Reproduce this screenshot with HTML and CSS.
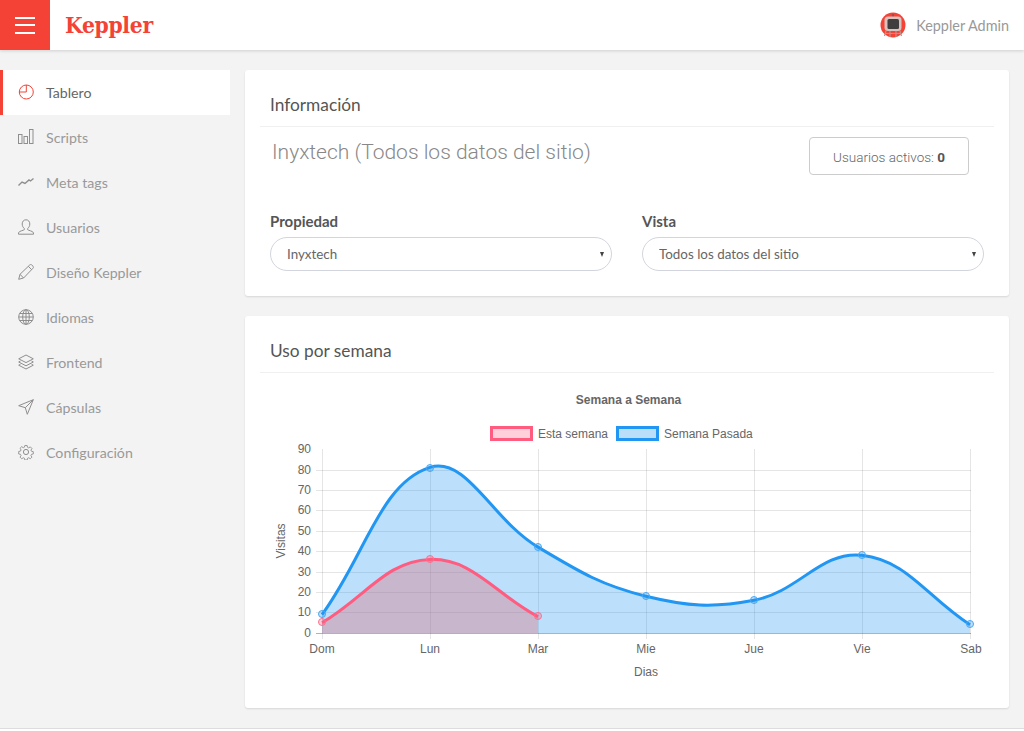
FILE: index.html
```html
<!DOCTYPE html>
<html lang="es">
<head>
  <meta charset="UTF-8" />
  <meta name="viewport" content="width=device-width, initial-scale=1.0" />
  <title>Keppler - Tablero</title>
  <link rel="stylesheet" href="styles.css">
</head>
<body>

  <header class="topbar">
    <button class="burger" type="button" aria-label="Menu"><span></span><span></span><span></span></button>
    <a class="logo" href="#">Keppler</a>
    <div class="user">
      <svg class="avatar" viewBox="0 0 26 26">
        <circle cx="13" cy="13" r="12.5" fill="#f44336"/>
        <path d="M13 2v3" stroke="#6a4a48" stroke-width="1"/>
        <rect x="4.500" y="4.500" width="17" height="14.500" rx="3.500" fill="#d8c2bd"/>
        <rect x="7.500" y="7" width="11.500" height="10" rx="1.500" fill="#3f3d3d"/>
        <path d="M6 19l-1.500 5M20 19l1.500 5M10 19v6M16 19v6M5 21.500h16" stroke="#b9928c" stroke-width="1.200" fill="none"/>
      </svg>
      <span>Keppler Admin</span>
    </div>
  </header>

  <div class="layout">
    <nav class="sidebar">
      <a class="nav-item active" href="#">
        <svg class="icon" viewBox="0 0 16 16"><circle cx="8.300" cy="8" r="7"/><path d="M8.300 1V8H1.300"/></svg>
        Tablero
      </a>
      <a class="nav-item" href="#">
        <svg class="icon" viewBox="0 0 16 16"><rect x=".5" y="5.500" width="3.500" height="9"/><rect x="6" y="7.500" width="3.500" height="7"/><rect x="11.500" y=".5" width="3.500" height="14"/></svg>
        Scripts
      </a>
      <a class="nav-item" href="#">
        <svg class="icon" viewBox="0 0 16 16"><path stroke-width="1.400" d="M.5 11.500L4 8l3 1.500L11 6l1.500 1L15.500 4.500"/></svg>
        Meta tags
      </a>
      <a class="nav-item" href="#">
        <svg class="icon" viewBox="0 0 16 16"><path d="M8 .8c2.300 0 3.800 1.700 3.800 4.200 0 2-1 3.700-2.100 4.400v1.300c0 .7 5.800 1.300 5.800 3.300v1.200H.5V13.900c0-1.900 5.800-2.600 5.800-3.200V9.400C5.200 8.700 4.200 7 4.200 5 4.200 2.500 5.700.8 8 .8Z"/></svg>
        Usuarios
      </a>
      <a class="nav-item" href="#">
        <svg class="icon" viewBox="0 0 16 16"><path d="M.7 15.300l1.300-5L11.800.9c.6-.5 1.400-.5 2 .1l1.200 1.200c.6.6.6 1.400 0 2L5.600 14Z"/><path d="M2 10.300L5.600 14M10.300 2.300l3.400 3.400"/></svg>
        Diseño Keppler
      </a>
      <a class="nav-item" href="#">
        <svg class="icon" viewBox="0 0 16 16"><circle cx="8" cy="8" r="7.300"/><ellipse cx="8" cy="8" rx="3.300" ry="7.300"/><path d="M8 .7v14.600M.7 8h14.600M1.700 4.500h12.600M1.700 11.500h12.600"/></svg>
        Idiomas
      </a>
      <a class="nav-item" href="#">
        <svg class="icon" viewBox="0 0 16 16"><path d="M8 1l7.300 3.800L8 8.600.7 4.800Z"/><path d="M2.500 7L.7 8 8 11.800 15.300 8l-1.800-1"/><path d="M2.500 10.200L.7 11.200 8 15l7.300-3.800-1.800-1"/></svg>
        Frontend
      </a>
      <a class="nav-item" href="#">
        <svg class="icon" viewBox="0 0 16 16"><path d="M15.300 .7L.7 6.700l6.600 2 2 6.600Z"/><path d="M15.300 .7L7.300 8.700"/></svg>
        Cápsulas
      </a>
      <a class="nav-item" href="#">
        <svg class="icon" viewBox="0 0 16 16"><path d="M6.700.8h2.600l.4 2 1.300.6 1.800-1.100 1.800 1.800-1.100 1.800.6 1.300 2 .4v2.600l-2 .4-.6 1.300 1.100 1.800-1.800 1.800-1.800-1.100-1.300.6-.4 2H6.700l-.4-2-1.300-.6-1.800 1.100-1.800-1.800 1.100-1.800-.6-1.300-2-.4V7.400l2-.4.6-1.300-1.100-1.800 1.800-1.800 1.800 1.100 1.300-.6Z" transform="translate(.8 .8) scale(.9)"/><circle cx="8" cy="8" r="2.600"/></svg>
        Configuración
      </a>
    </nav>

    <main class="content">
      <section class="card">
        <h3 class="card-title">Información</h3>
        <div class="info-top">
          <h2 class="site-name">Inyxtech (Todos los datos del sitio)</h2>
          <div class="active-users">Usuarios activos: <b>0</b></div>
        </div>
        <div class="filters">
          <div class="field">
            <label for="propiedad">Propiedad</label>
            <div class="select-box"><select id="propiedad"><option>Inyxtech</option></select></div>
          </div>
          <div class="field">
            <label for="vista">Vista</label>
            <div class="select-box"><select id="vista"><option>Todos los datos del sitio</option></select></div>
          </div>
        </div>
      </section>

      <section class="card">
        <h3 class="card-title">Uso por semana</h3>
        <svg class="chart" viewBox="245 373 764 335">
          <text class="chart-title" x="628.500" y="403.500" text-anchor="middle">Semana a Semana</text>

          <rect x="491.500" y="427.500" width="40" height="12" fill="#ffd0d9" stroke="#ff5c7f" stroke-width="3"/>
          <text class="chart-label" x="538" y="437.500">Esta semana</text>
          <rect x="617.500" y="427.500" width="40" height="12" fill="#bbdffb" stroke="#2196f3" stroke-width="3"/>
          <text class="chart-label" x="664" y="437.500">Semana Pasada</text>

          <g class="grid">
            <path d="M322.500 449v190M430.500 449v190M538.500 449v190M646.500 449v190M754.500 449v190M862.500 449v190M970.500 449v190"/>
            <path d="M316 470.500h655M316 490.500h655M316 510.500h655M316 531.500h655M316 551.500h655M316 572.500h655M316 592.500h655M316 612.500h655"/>
          </g>
          <path class="axis" d="M316 633.500h655"/>

          <g class="chart-label">
            <text x="311" y="453" text-anchor="end">90</text>
            <text x="311" y="474" text-anchor="end">80</text>
            <text x="311" y="494" text-anchor="end">70</text>
            <text x="311" y="514" text-anchor="end">60</text>
            <text x="311" y="535" text-anchor="end">50</text>
            <text x="311" y="555" text-anchor="end">40</text>
            <text x="311" y="576" text-anchor="end">30</text>
            <text x="311" y="596" text-anchor="end">20</text>
            <text x="311" y="616" text-anchor="end">10</text>
            <text x="311" y="637" text-anchor="end">0</text>
            <text x="322" y="653" text-anchor="middle">Dom</text>
            <text x="430" y="653" text-anchor="middle">Lun</text>
            <text x="538" y="653" text-anchor="middle">Mar</text>
            <text x="646" y="653" text-anchor="middle">Mie</text>
            <text x="754" y="653" text-anchor="middle">Jue</text>
            <text x="862" y="653" text-anchor="middle">Vie</text>
            <text x="971" y="653" text-anchor="middle">Sab</text>
            <text x="646" y="676" text-anchor="middle">Dias</text>
            <text transform="translate(285 541) rotate(-90)" text-anchor="middle">Visitas</text>
          </g>

          <path class="area-blue" d="M322 614.600C365.200 555.700 380.200 483 430 467.400C466.600 456 492.100 519.800 538 547.100C578.500 571.300 600.800 585.100 646 596.200C687.200 606.300 712.500 608.200 754 600.300C798.900 591.800 820.800 550.600 862 555.300C907.200 560.400 926.800 597 970 624.800V633H322Z"/>
          <path class="area-pink" d="M322 622.800C365.200 597.400 386.300 560.700 430 559.400C472.700 558.200 494.800 593.700 538 616.600V633H322Z"/>
          <path class="line-blue" d="M322 614.600C365.200 555.700 380.200 483 430 467.400C466.600 456 492.100 519.800 538 547.100C578.500 571.300 600.800 585.100 646 596.200C687.200 606.300 712.500 608.200 754 600.300C798.900 591.800 820.800 550.600 862 555.300C907.200 560.400 926.800 597 970 624.800"/>
          <path class="line-pink" d="M322 622.800C365.200 597.400 386.300 560.700 430 559.400C472.700 558.200 494.800 593.700 538 616.600"/>

          <g class="dots-blue">
            <circle cx="322" cy="614" r="3.500"/>
            <circle cx="430" cy="468" r="3.500"/>
            <circle cx="538" cy="547" r="3.500"/>
            <circle cx="646" cy="596" r="3.500"/>
            <circle cx="754" cy="600" r="3.500"/>
            <circle cx="862" cy="555" r="3.500"/>
            <circle cx="970" cy="624" r="3.500"/>
          </g>
          <g class="dots-pink">
            <circle cx="322" cy="622" r="3.500"/>
            <circle cx="430" cy="559" r="3.500"/>
            <circle cx="538" cy="616" r="3.500"/>
          </g>
        </svg>
      </section>
    </main>
  </div>

  <footer class="footer"></footer>

</body>
</html>
```

FILE: styles.css
```css
* {
  box-sizing: border-box;
}

html, body {
  margin: 0;
  height: 731px;
  overflow: hidden;
}

body {
  background: #f3f3f3;
  color: #666;
  font-family: 'Lato', sans-serif;
  font-size: 14.200px;
}

a {
  text-decoration: none;
  color: inherit;
}

/* top bar */
.topbar {
  display: flex;
  align-items: center;
  height: 50px;
  background: #fff;
  box-shadow: 0 1px 3px rgba(0, 0, 0, .15);
  position: relative;
}

.burger {
  display: flex;
  flex-direction: column;
  justify-content: center;
  gap: 5.500px;
  width: 50px;
  height: 50px;
  padding: 0 15px;
  background: #f44336;
  border: none;
}

.burger span {
  display: block;
  height: 2px;
  background: #fff;
}

.logo {
  margin-left: 15px;
  color: #f44336;
  font-family: 'DejaVu Serif', serif;
  font-stretch: condensed;
  font-weight: bold;
  font-size: 22.600px;
  letter-spacing: -.3px;
}

.user {
  display: flex;
  align-items: center;
  gap: 10px;
  margin-left: auto;
  padding-right: 15px;
  color: #999;
  font-size: 14.400px;
}

.avatar {
  width: 26px;
  height: 26px;
}

/* sidebar */
.layout {
  display: flex;
}

.sidebar {
  flex: none;
  width: 230px;
  padding-top: 20px;
}

.nav-item {
  display: flex;
  align-items: center;
  gap: 12px;
  height: 45px;
  padding-left: 15px;
  border-left: 3px solid transparent;
  color: #999;
}

.nav-item.active {
  background: #fff;
  border-left-color: #f44336;
  color: #666;
}

.icon {
  flex: none;
  width: 16px;
  height: 16px;
  margin-bottom: 2px;
  fill: none;
  stroke: #8e8e8e;
  stroke-width: 1;
}

.nav-item.active .icon {
  stroke: #f44336;
}

/* cards */
.content {
  flex: 1;
  padding: 20px 15px 0;
}

.card {
  background: #fff;
  border-radius: 3px;
  box-shadow: 0 1px 2px rgba(0, 0, 0, .12);
  margin-bottom: 20px;
}

.card-title {
  margin: 0 15px;
  padding: 0 10px;
  height: 57px;
  line-height: 70px;
  border-bottom: 1px solid #f0f0f0;
  font-size: 17.300px;
  font-weight: normal;
  color: #555;
}

.info-top {
  display: flex;
  justify-content: space-between;
  align-items: flex-start;
  padding: 10px 40px 0 27px;
}

.site-name {
  margin: 0;
  font-family: 'Roboto', sans-serif;
  font-weight: 300;
  font-size: 21px;
  line-height: 30px;
  color: #888;
}

.active-users {
  width: 160px;
  height: 38px;
  line-height: 38px;
  text-align: center;
  border: 1px solid #ccc;
  border-radius: 4px;
  font-family: 'Roboto', sans-serif;
  font-weight: 300;
  font-size: 13.500px;
}

.active-users b {
  font-weight: bold;
  color: #555;
}

.filters {
  display: grid;
  grid-template-columns: 342px 342px;
  gap: 30px;
  padding: 36px 25px 25px;
}

.field label {
  display: block;
  margin-bottom: 6px;
  font-weight: bold;
  font-size: 15px;
  line-height: 20px;
  color: #555;
}

.select-box {
  position: relative;
}

.select-box::after {
  content: "";
  position: absolute;
  top: 15px;
  right: 8px;
  border-style: solid;
  border-width: 5px 2.500px 0;
  border-color: #444 transparent transparent;
}

.field select {
  display: block;
  width: 100%;
  height: 34px;
  padding: 0 5px 1px 16px;
  appearance: none;
  background: #fff;
  border: 1px solid #d3d5de;
  border-radius: 17px;
  font-family: 'Lato', sans-serif;
  font-size: 13.400px;
  color: #666;
}

/* chart */
.chart {
  display: block;
  width: 764px;
  height: 335px;
}

.chart text {
  font-family: 'Liberation Sans', sans-serif;
  font-size: 12px;
  fill: #666;
}

.chart .chart-title {
  font-weight: bold;
  font-size: 12px;
}

.grid path {
  fill: none;
  stroke: rgba(0, 0, 0, .1);
}

.axis {
  fill: none;
  stroke: rgba(0, 0, 0, .3);
}

.area-blue {
  fill: rgba(33, 150, 243, .3);
}

.area-pink {
  fill: rgba(228, 90, 100, .3);
}

.line-blue, .line-pink {
  fill: none;
  stroke-width: 3;
}

.line-blue {
  stroke: #2196f3;
}

.line-pink {
  stroke: #ff5c7f;
}

.dots-blue circle {
  fill: rgba(33, 150, 243, .3);
  stroke: #4aa8f5;
}

.dots-pink circle {
  fill: rgba(255, 92, 127, .3);
  stroke: #ff6f8f;
}

.footer {
  height: 3px;
  background: #fff;
  border-top: 1px solid #ddd;
}
```
